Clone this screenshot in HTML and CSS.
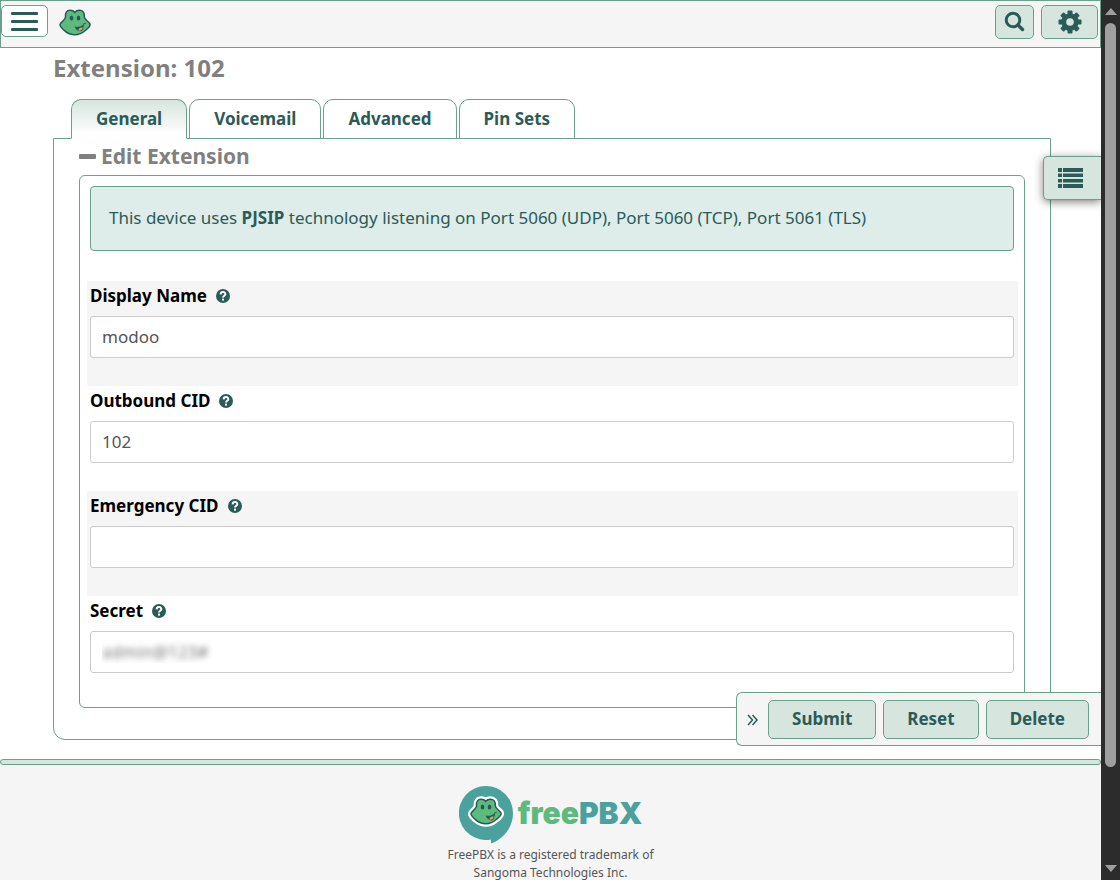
FILE: index.html
```html
<!DOCTYPE html>
<html lang="en">
<head>
  <meta charset="UTF-8" />
  <meta name="viewport" content="width=device-width, initial-scale=1.0" />
  <title>Extension: 102</title>
  <link rel="stylesheet" href="styles.css">
</head>
<body>
  <svg class="sprite" aria-hidden="true">
    <symbol id="frog" viewBox="0 0 32 27" overflow="visible">
      <path class="frog-face" d="M6.500 8C6 3.500 8 1.200 11 1.200c2 0 3.700.6 4.700 2 1.200-1.400 2.800-2 4.800-2 3.200 0 5.200 2.300 4.800 6.300 0 1.800 1.200 3 3 4.500 1.700 1.300 2.800 2.200 2.800 3.500 0 1.800-2.200 4-4.600 5.800-3 2.700-6.500 4.500-10.500 4.500s-7.500-1.500-10.500-4.200C3 19.600 1 17.500 1 15.500 1 13.200 6.500 11.500 6.500 8z"/>
      <ellipse class="frog-eye" cx="12.500" cy="9" rx="1.800" ry="2.500"/>
      <ellipse class="frog-eye" cx="19.500" cy="9" rx="1.800" ry="2.500"/>
      <path class="frog-mouth" d="M15.500 17.600c4 .8 7.300-.2 9.300-2.900.3 4.500-1.300 7.600-4 7.600-2 0-4-1.900-5.300-4.700z"/>
      <path class="frog-tongue" d="M19.300 21.300c.5-2 2.300-3.200 4.500-2.700-.7 2.500-2.500 3.700-4.500 2.700z"/>
      <path class="frog-smile" d="M24 15.200l2.800-.9"/>
    </symbol>
    <symbol id="help" viewBox="0 0 14 14">
      <circle cx="7" cy="7" r="7" fill="#2b5b57"/>
      <path d="M4.600 5.400c.2-3.300 5-3.100 4.700 0C9.200 6.800 7 6.700 7 8.600" fill="none" stroke="#fff" stroke-width="2"/>
      <rect x="6" y="9.600" width="2" height="2" fill="#fff"/>
    </symbol>
  </svg>

  <div class="window">
    <div class="page">
      <header class="topbar">
        <button class="menu-btn" aria-label="Menu"><span></span><span></span><span></span></button>
        <a class="brand" href="#" aria-label="Home"><svg width="32" height="27"><use href="#frog"/></svg></a>
        <div class="tools">
          <button class="btn search-btn" aria-label="Search">
            <svg width="22" height="22" viewBox="0 0 22 22"><circle cx="9" cy="9" r="6.800" fill="none" stroke="#2b5b57" stroke-width="3"/><path d="M14 14l4.500 4.500" stroke="#2b5b57" stroke-width="3.400" stroke-linecap="round"/></svg>
          </button>
          <button class="btn settings-btn" aria-label="Settings">
            <svg width="24" height="24" viewBox="-12 -12 24 24">
              <g fill="#2b5b57">
                <rect x="-2.500" y="-11.500" width="5" height="23" rx="1"/>
                <rect x="-2.500" y="-11.500" width="5" height="23" rx="1" transform="rotate(45)"/>
                <rect x="-2.500" y="-11.500" width="5" height="23" rx="1" transform="rotate(90)"/>
                <rect x="-2.500" y="-11.500" width="5" height="23" rx="1" transform="rotate(135)"/>
                <circle r="8.700"/>
              </g>
              <circle r="3.800" fill="#d6e5de"/>
            </svg>
          </button>
        </div>
      </header>

      <main class="content">
        <h1>Extension: 102</h1>
        <nav class="tabs">
          <a class="tab active" href="#general">General</a>
          <a class="tab" href="#voicemail">Voicemail</a>
          <a class="tab" href="#advanced">Advanced</a>
          <a class="tab" href="#pinsets">Pin Sets</a>
        </nav>

        <form class="panel" id="general">
          <h2><span class="minus"></span>Edit Extension</h2>
          <div class="section">
            <div class="alert">This device uses <strong>PJSIP</strong> technology listening on Port 5060 (UDP), Port 5060 (TCP), Port 5061 (TLS)</div>
            <div class="field">
              <label for="name">Display Name <svg width="14" height="14"><use href="#help"/></svg></label>
              <input id="name" type="text" value="modoo">
            </div>
            <div class="field">
              <label for="outcid">Outbound CID <svg width="14" height="14"><use href="#help"/></svg></label>
              <input id="outcid" type="text" value="102">
            </div>
            <div class="field">
              <label for="emcid">Emergency CID <svg width="14" height="14"><use href="#help"/></svg></label>
              <input id="emcid" type="text" value="">
            </div>
            <div class="field">
              <label for="secret">Secret <svg width="14" height="14"><use href="#help"/></svg></label>
              <input id="secret" class="secret" type="text" value="admin@123#">
            </div>
          </div>
        </form>

        <button class="list-btn" aria-label="Show list">
          <svg width="26" height="20" viewBox="0 0 26 20" fill="#2b5b57">
            <path d="M0 0h4v4H0zM5 0h20v4H5zM0 5.500h4v3.500H0zM5 5.500h20v3.500H5zM0 11h4v3.500H0zM5 11h20v3.500H5zM0 16h4v4H0zM5 16h20v4H5z"/>
          </svg>
        </button>

        <div class="actions">
          <a class="collapse" href="#" aria-label="Hide actions">
            <svg width="12" height="12" viewBox="0 0 12 12" fill="none" stroke="#2b5b57" stroke-width="1.500"><path d="M1 1l4.500 5L1 11M5.500 1L10 6l-4.500 5"/></svg>
          </a>
          <button class="btn">Submit</button>
          <button class="btn">Reset</button>
          <button class="btn">Delete</button>
        </div>
      </main>

      <footer>
        <div class="logo">
          <svg width="54" height="58" viewBox="0 0 54 58">
            <path d="M27 0a27 27 0 0 1 27 27c0 14-9 26-22 30.500V53.500A27 27 0 1 1 27 0z" fill="#4ba29d"/>
            <use class="frog-outline" href="#frog" x="11" y="12" width="32" height="27"/>
            <use href="#frog" x="11" y="12" width="32" height="27"/>
          </svg>
          <span class="wordmark">free<b>PBX</b></span>
        </div>
        <p>FreePBX is a registered trademark of<br>Sangoma Technologies Inc.</p>
      </footer>
    </div>

    <div class="scrollbar">
      <i class="arrow up"></i>
      <div class="track"><div class="thumb"></div></div>
      <i class="arrow down"></i>
    </div>
  </div>
</body>
</html>
```
FILE: styles.css
```css
* { box-sizing: border-box; }
body {
  margin: 0;
  font-family: "Noto Sans", "Open Sans", sans-serif;
  font-size: 17px;
  color: #2b5b57;
  background: white;
}
.sprite {
  position: absolute;
  width: 0;
  height: 0;
}
svg { display: block; }
a { color: inherit; text-decoration: none; }
.window {
  display: flex;
  height: 100vh;
  overflow: hidden;
}
.page {
  flex: 1;
  min-width: 0;
  display: flex;
  flex-direction: column;
  overflow: hidden;
}

/* frog */
.frog-face {
  fill: #5dba7d;
  stroke: var(--edge, #27585a);
  stroke-width: var(--edge-width, 1.5);
}
.frog-eye, .frog-mouth { fill: #27585a; }
.frog-tongue { fill: #f6a04d; }
.frog-smile { fill: none; stroke: #27585a; stroke-width: 1; }
.frog-outline { --edge: white; --edge-width: 6; }

/* buttons */
.btn {
  display: flex;
  align-items: center;
  justify-content: center;
  font: inherit;
  font-weight: bold;
  color: #2b5b57;
  background: #d6e5de;
  border: 1px solid #6aa18c;
  border-radius: 5px;
  cursor: pointer;
}

/* top bar */
.topbar {
  flex: none;
  display: flex;
  align-items: flex-start;
  height: 48px;
  padding: 4px 2px 0 0;
  background: #f5f5f5;
  border: 1px solid #6aa18c;
}
.menu-btn {
  display: flex;
  flex-direction: column;
  justify-content: center;
  gap: 5px;
  width: 47px;
  height: 32px;
  padding: 0 9px;
  background: white;
  border: 1px solid #6aa18c;
  border-radius: 5px;
}
.menu-btn span {
  height: 3px;
  border-radius: 1px;
  background: #2b5b57;
}
.brand { margin: 4px 0 0 11px; }
.tools {
  display: flex;
  gap: 7px;
  margin-left: auto;
}
.tools .btn { height: 34px; padding: 0; }
.search-btn { width: 39px; }
.settings-btn { width: 57px; }

/* content */
.content {
  flex: none;
  position: relative;
  padding: 0 50px 19px 53px;
}
h1 {
  margin: 0;
  padding-top: 4px;
  font-size: 24px;
  line-height: 32px;
  color: #808080;
}
.tabs {
  display: flex;
  gap: 2px;
  margin: 15px 0 -1px;
  padding-left: 18px;
}
.tab {
  position: relative;
  height: 40px;
  padding: 0 24px;
  line-height: 38px;
  font-weight: bold;
  border: 1px solid #6aa18c;
  border-radius: 10px 10px 0 0;
}
.tab.active {
  z-index: 1;
  background: linear-gradient(#d6e5de, white 90%);
  border-bottom-color: white;
}
.panel {
  padding: 0 25px 31px;
  border: 1px solid #6aa18c;
  border-radius: 0 0 12px 12px;
}
h2 {
  display: flex;
  align-items: center;
  gap: 5px;
  margin: 0 0 2px;
  font-size: 21px;
  line-height: 34px;
  color: #808080;
}
.minus {
  width: 17px;
  height: 5px;
  border-radius: 1px;
  background: #808080;
}
.section {
  padding: 10px 6px 6px 7px;
  border: 1px solid #6aa18c;
  border-radius: 6px;
}
.alert {
  margin: 0 4px 30px 3px;
  padding: 19px 18px 21px;
  line-height: 23px;
  background: #deecea;
  border: 1px solid #6aa18c;
  border-radius: 4px;
}
.field {
  height: 105px;
  padding: 0 4px 0 3px;
}
.field:nth-child(even) { background: #f5f5f5; }
.field label {
  display: flex;
  align-items: center;
  gap: 9px;
  height: 29px;
  margin-bottom: 6px;
  font-weight: bold;
  color: black;
}
.field input {
  width: 100%;
  height: 42px;
  padding: 0 11px 2px;
  font: inherit;
  color: #555;
  background: white;
  border: 1px solid #ccc;
  border-radius: 3px;
  outline: none;
}
.field .secret {
  color: transparent;
  text-shadow: 0 0 6px #777;
}

/* floating controls */
.list-btn {
  position: absolute;
  top: 108px;
  right: 0;
  display: flex;
  align-items: center;
  width: 58px;
  height: 44px;
  padding: 0 14px;
  background: #d6e5de;
  border: 1px solid #6aa18c;
  border-right: none;
  border-radius: 5px 0 0 5px;
  box-shadow: 0 2px 8px rgba(0, 0, 0, 0.5);
}
.actions {
  position: absolute;
  right: 0;
  bottom: 13px;
  display: flex;
  align-items: center;
  gap: 7px;
  padding: 7px 12px 6px 10px;
  background: #f5f5f5;
  border: 1px solid #6aa18c;
  border-right: none;
  border-radius: 6px 0 0 6px;
}
.collapse { margin-right: 2px; }
.actions .btn {
  height: 39px;
  padding: 0 23px 2px;
}

/* footer */
footer {
  flex: 1 0 auto;
  display: flex;
  flex-direction: column;
  align-items: center;
  background: #f5f5f5;
}
footer::before {
  content: "";
  align-self: stretch;
  height: 4px;
  background: #d6e5de;
  border: 1px solid #6aa18c;
  border-radius: 3px;
}
.logo {
  display: flex;
  align-items: flex-start;
  gap: 5px;
  margin-top: 21px;
}
.wordmark {
  font-family: Inter, sans-serif;
  font-size: 30px;
  font-weight: 900;
  line-height: 54px;
  color: #5dba7d;
}
.wordmark b {
  font-weight: 900;
  color: #4ba29d;
}
footer p {
  margin: 2px 0 0;
  font-size: 12px;
  line-height: 18px;
  text-align: center;
  color: #555;
}

/* scrollbar */
.scrollbar {
  display: flex;
  flex-direction: column;
  align-items: center;
  width: 19px;
  padding: 8px 0;
  background: #2c2c2c;
}
.track {
  flex: 1;
  width: 11px;
  margin: 8px 0 9px;
}
.thumb {
  height: calc(90% - 6px);
  border-radius: 6px;
  background: #9f9f9f;
}
.arrow {
  border: 6px solid transparent;
  border-width: 0 6px;
}
.arrow.up { border-bottom: 7px solid #9f9f9f; }
.arrow.down { border-top: 7px solid #9f9f9f; }
```
